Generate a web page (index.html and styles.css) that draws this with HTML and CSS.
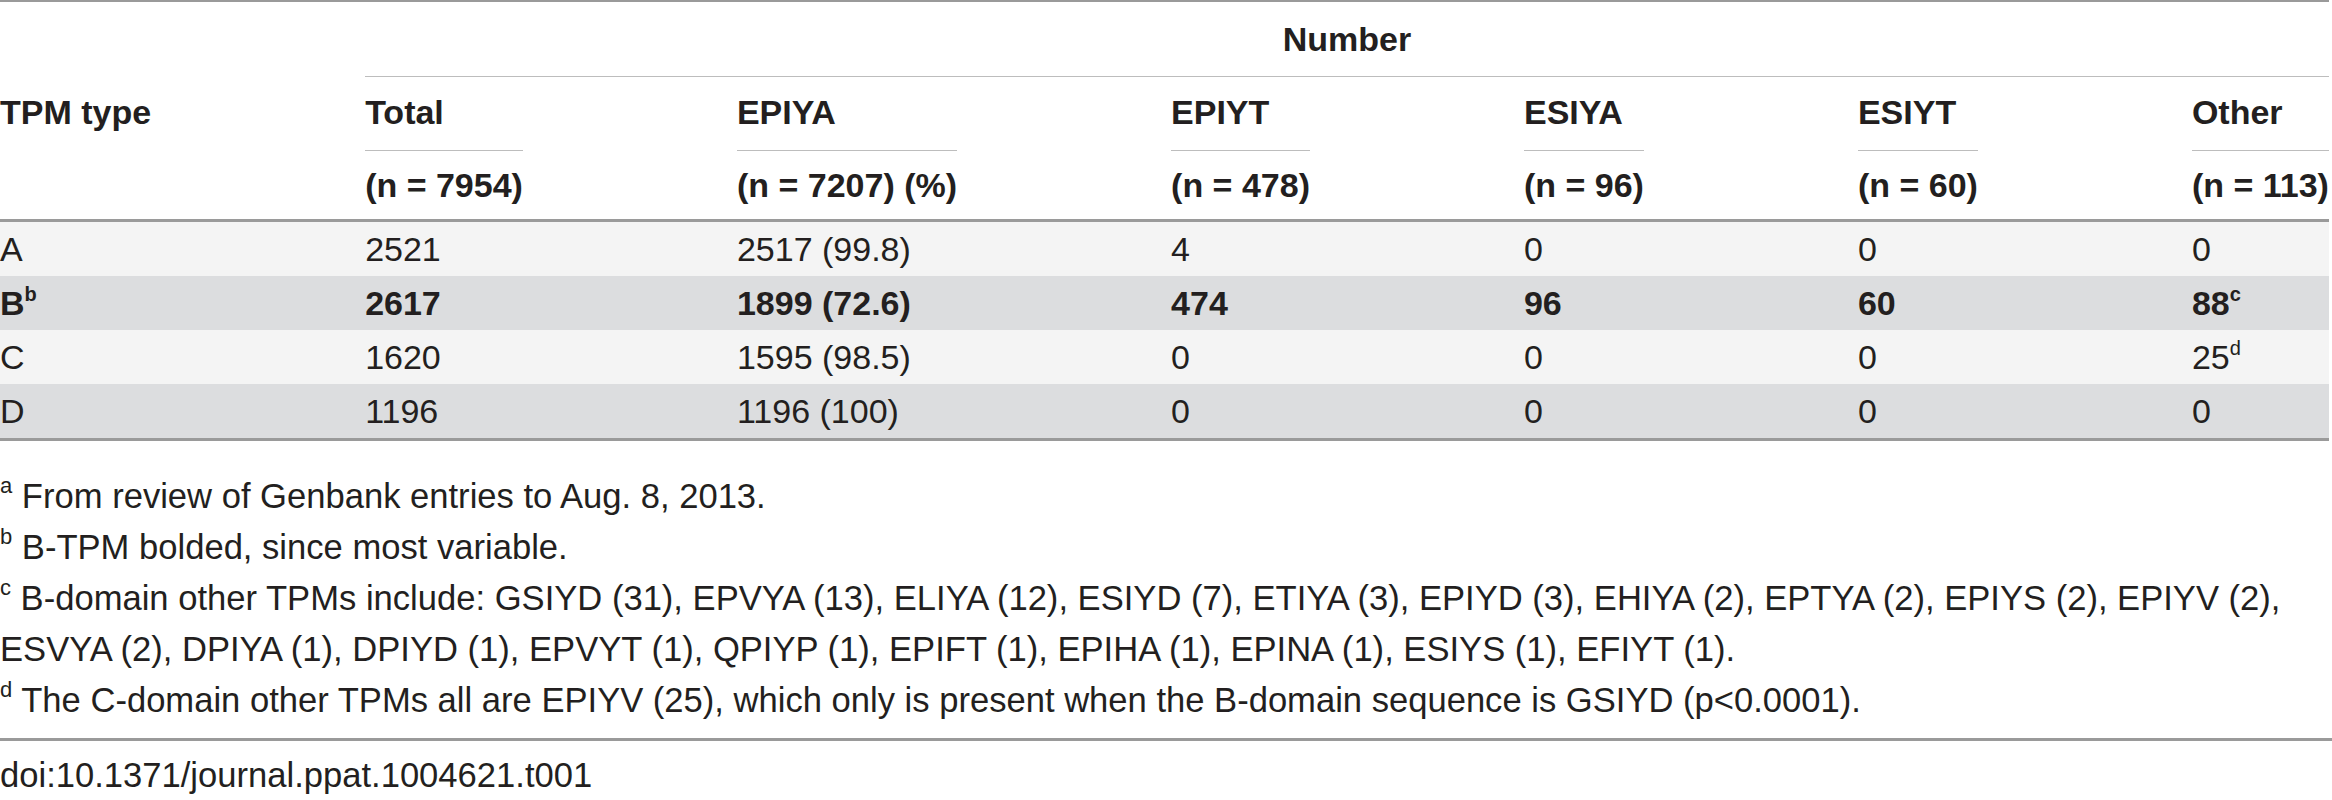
FILE: index.html
```html
<!DOCTYPE html>
<html lang="en">
<head>
<meta charset="utf-8">
<title>Table 1</title>
<link rel="stylesheet" href="styles.css">
</head>
<body>
<div class="page">
  <table class="data">
    <thead>
      <tr class="group-row">
        <th class="corner"></th>
        <th class="group" colspan="6">Number</th>
      </tr>
      <tr class="col-row">
        <th><span class="h1">TPM type</span></th>
        <th><span class="h1 ul">Total</span><span class="h2">(n = 7954)</span></th>
        <th><span class="h1 ul">EPIYA</span><span class="h2">(n = 7207) (%)</span></th>
        <th><span class="h1 ul">EPIYT</span><span class="h2">(n = 478)</span></th>
        <th><span class="h1 ul">ESIYA</span><span class="h2">(n = 96)</span></th>
        <th><span class="h1 ul">ESIYT</span><span class="h2">(n = 60)</span></th>
        <th><span class="h1 ul">Other</span><span class="h2">(n = 113)</span></th>
      </tr>
    </thead>
    <tbody>
      <tr class="light">
        <td>A</td><td>2521</td><td>2517 (99.8)</td><td>4</td><td>0</td><td>0</td><td>0</td>
      </tr>
      <tr class="dark strong">
        <td>B<sup>b</sup></td><td>2617</td><td>1899 (72.6)</td><td>474</td><td>96</td><td>60</td><td>88<sup>c</sup></td>
      </tr>
      <tr class="light">
        <td>C</td><td>1620</td><td>1595 (98.5)</td><td>0</td><td>0</td><td>0</td><td>25<sup>d</sup></td>
      </tr>
      <tr class="dark">
        <td>D</td><td>1196</td><td>1196 (100)</td><td>0</td><td>0</td><td>0</td><td>0</td>
      </tr>
    </tbody>
  </table>

  <div class="notes">
    <p class="note"><sup>a</sup> <span>From review of Genbank entries to Aug. 8, 2013.</span></p>
    <p class="note"><sup>b</sup> <span>B-TPM bolded, since most variable.</span></p>
    <p class="note"><sup>c</sup> <span>B-domain other TPMs include: GSIYD (31), EPVYA (13), ELIYA (12), ESIYD (7), ETIYA (3), EPIYD (3), EHIYA (2), EPTYA (2), EPIYS (2), EPIYV (2),</span> <span>ESVYA (2), DPIYA (1), DPIYD (1), EPVYT (1), QPIYP (1), EPIFT (1), EPIHA (1), EPINA (1), ESIYS (1), EFIYT (1).</span></p>
    <p class="note"><sup>d</sup> <span>The C-domain other TPMs all are EPIYV (25), which only is present when the B-domain sequence is GSIYD (p&lt;0.0001).</span></p>
  </div>

  <p class="doi">doi:10.1371/journal.ppat.1004621.t001</p>
</div>
</body>
</html>
```

FILE: styles.css
```css
html, body {
  margin: 0;
  padding: 0;
  background: #ffffff;
}

body {
  font-family: "Liberation Sans", Arial, Helvetica, sans-serif;
  font-size: 34px;
  color: #231f20;
}

.page {
  width: 2332px;
}

.data {
  border-collapse: separate;
  border-spacing: 0;
  border-top: 2px solid #9a9a9a;
  border-bottom: 3px solid #9a9a9a;
}

.data th,
.data td {
  padding: 0 214px 0 0;
  text-align: left;
  white-space: nowrap;
}

.data th:last-child,
.data td:last-child {
  padding-right: 0;
}

.data th {
  font-weight: bold;
  vertical-align: top;
}

.group-row .group {
  text-align: center;
  line-height: 54px;
  padding: 10px 0;
  border-bottom: 1px solid #bdbdbd;
}

.col-row th {
  padding-top: 8px;
  border-bottom: 3px solid #9a9a9a;
}

.h1 {
  display: block;
  line-height: 54px;
}

.h1.ul {
  padding-bottom: 11px;
  border-bottom: 1px solid #bdbdbd;
}

.h2 {
  display: block;
  line-height: 54px;
  padding: 7px 0;
}

.data td {
  height: 54px;
  line-height: 54px;
  vertical-align: middle;
}

.light {
  background: #f4f4f4;
}

.dark {
  background: #dcdddf;
}

.strong td {
  font-weight: bold;
}

.data sup {
  font-size: 20px;
  line-height: 0;
  vertical-align: 14px;
}

.notes {
  margin-top: 30px;
  padding-bottom: 12px;
  border-bottom: 3px solid #9a9a9a;
  font-size: 34.6px;
}

.note {
  margin: 0;
  line-height: 51px;
}

.note sup {
  font-size: 22px;
  line-height: 0;
  vertical-align: 15px;
}

.doi {
  margin: 9px 0 0;
  line-height: 51px;
  font-size: 34.6px;
}
```
